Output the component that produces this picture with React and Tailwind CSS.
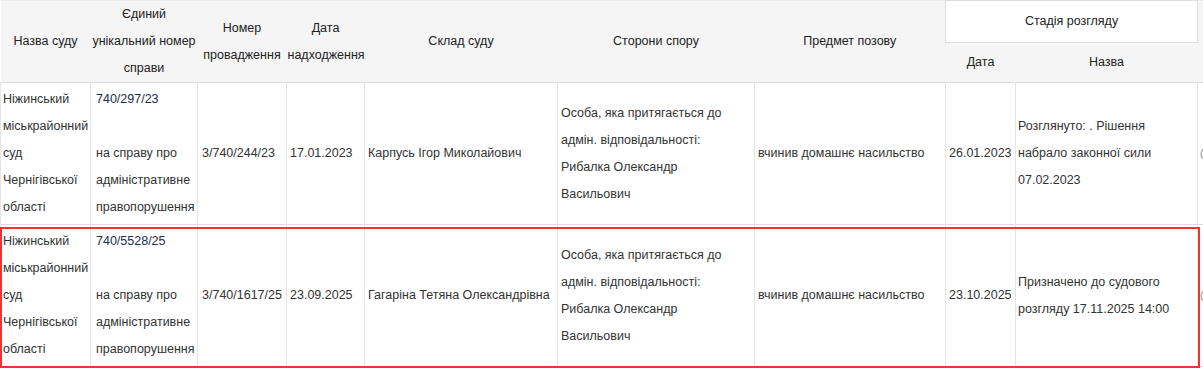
import React from "react";

const td = "align-middle pl-[3px] pr-[2px] py-[3px] border-x border-[#e6e6e6] leading-[27px] whitespace-nowrap";
const th = "align-middle px-[1px] py-0 font-normal text-center leading-[27px] text-[#222] whitespace-nowrap";

function Circle() {
  return (
    <svg width="14" height="14" viewBox="0 0 14 14" className="block">
      <circle cx="7" cy="7" r="6" fill="none" stroke="#a0a0a0" strokeWidth="1.2" />
    </svg>
  );
}

function Row({ num, proc, date, judge, stageDate, stage }) {
  return (
    <tr className="border-b border-[#dcdcdc] h-[142px]">
      <td className={td + " !pl-[2px]"}>
        Ніжинський<br />міськрайонний<br />суд<br />Чернігівської<br />області
      </td>
      <td className={td + " !pl-[5px]"}>
        <span className="text-[#1b2f4d]">{num}</span>
        <br />
        <br />
        на справу про<br />адміністративне<br />правопорушення
      </td>
      <td className={td + " !pl-[4px]"}>{proc}</td>
      <td className={td}>{date}</td>
      <td className={td}>{judge}</td>
      <td className={td}>
        Особа, яка притягається до<br />адмін. відповідальності:<br />Рибалка Олександр<br />Васильович
      </td>
      <td className={td}>вчинив домашнє насильство</td>
      <td className={td}>{stageDate}</td>
      <td className={td + " !pl-[2px]"}>{stage}</td>
      <td className="align-middle pl-[2px] border-l border-[#e6e6e6]">
        <Circle />
      </td>
    </tr>
  );
}

export default function App() {
  return (
    <div className="relative w-[1203px] h-[373px] overflow-hidden bg-white font-['Liberation_Sans',Arial,sans-serif] text-[12.5px] text-[#333]">
      <table className="table-fixed border-collapse w-[1257px]">
        <colgroup>
          <col className="w-[90px]" />
          <col className="w-[107px]" />
          <col className="w-[89px]" />
          <col className="w-[78px]" />
          <col className="w-[193px]" />
          <col className="w-[197px]" />
          <col className="w-[191px]" />
          <col className="w-[70px]" />
          <col className="w-[182px]" />
          <col className="w-[60px]" />
        </colgroup>
        <thead className="bg-[#f5f5f5]">
          <tr className="h-[41px] border-t border-[#ececec]">
            <th rowSpan={2} className={th}>Назва суду</th>
            <th rowSpan={2} className={th}>
              Єдиний<br />унікальний номер<br />справи
            </th>
            <th rowSpan={2} className={th}>
              Номер<br />провадження
            </th>
            <th rowSpan={2} className={th}>
              Дата<br />надходження
            </th>
            <th rowSpan={2} className={th}>Склад суду</th>
            <th rowSpan={2} className={th}>Сторони спору</th>
            <th rowSpan={2} className={th}>Предмет позову</th>
            <th colSpan={2} className={th + " bg-white border border-[#dedede]"}>
              Стадія розгляду
            </th>
            <th rowSpan={2} className={th}></th>
          </tr>
          <tr className="h-[40px] border-b border-[#dcdcdc]">
            <th className={th}>Дата</th>
            <th className={th}>Назва</th>
          </tr>
        </thead>
        <tbody>
          <Row
            num="740/297/23"
            proc="3/740/244/23"
            date="17.01.2023"
            judge="Карпусь Ігор Миколайович"
            stageDate="26.01.2023"
            stage={
              <>
                Розглянуто: . Рішення<br />набрало законної сили<br />07.02.2023
              </>
            }
          />
          <Row
            num="740/5528/25"
            proc="3/740/1617/25"
            date="23.09.2025"
            judge="Гагаріна Тетяна Олександрівна"
            stageDate="23.10.2025"
            stage={
              <>
                Призначено до судового<br />розгляду 17.11.2025 14:00
              </>
            }
          />
        </tbody>
      </table>
      <div className="absolute left-0 top-[227px] w-[1200px] h-[141px] border-2 border-[#f03434] pointer-events-none" />
    </div>
  );
}
